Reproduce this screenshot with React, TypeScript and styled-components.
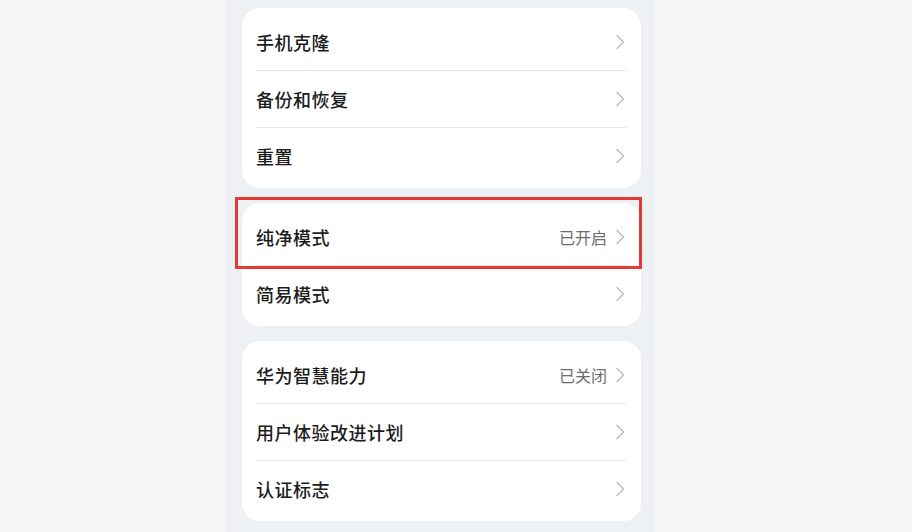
import React from "react";
import styled, { createGlobalStyle } from "styled-components";

type SettingItem = {
  label: string;
  value?: string;
  highlighted?: boolean;
};

const GROUPS: SettingItem[][] = [
  [{ label: "手机克隆" }, { label: "备份和恢复" }, { label: "重置" }],
  [{ label: "纯净模式", value: "已开启", highlighted: true }, { label: "简易模式" }],
  [
    { label: "华为智慧能力", value: "已关闭" },
    { label: "用户体验改进计划" },
    { label: "认证标志" },
  ],
];

const GlobalStyle = createGlobalStyle`
  html, body {
    margin: 0;
    padding: 0;
    background: #f6f6f6;
  }
  body {
    font-family: "Noto Sans CJK SC", "Noto Sans", sans-serif;
  }
`;

const Chevron = () => (
  <ChevronIcon width="10" height="16" viewBox="0 0 10 16" fill="none">
    <path
      d="M2 1.5L8.5 8L2 14.5"
      stroke="#bdbdbd"
      strokeWidth="1.5"
      strokeLinecap="round"
      strokeLinejoin="round"
    />
  </ChevronIcon>
);

const SettingRow = ({ label, value, highlighted }: SettingItem) => (
  <Row $highlighted={highlighted}>
    <Label>{label}</Label>
    <Trailing>
      {value && <Value>{value}</Value>}
      <Chevron />
    </Trailing>
  </Row>
);

export default function App() {
  return (
    <>
      <GlobalStyle />
      <Page>
        <Column>
          {GROUPS.map((group, index) => (
            <Card key={index}>
              {group.map((item) => (
                <SettingRow key={item.label} {...item} />
              ))}
            </Card>
          ))}
        </Column>
      </Page>
    </>
  );
}

const Page = styled.div`
  min-height: 532px;
  display: flex;
`;

const Column = styled.div`
  margin-left: 226px;
  width: 429px;
  min-height: 532px;
  box-sizing: border-box;
  padding: 8px 14px 0 16px;
  background: #eef1f3;
  display: flex;
  flex-direction: column;
  gap: 15px;
`;

const Card = styled.div`
  background: #ffffff;
  border-radius: 18px;
  padding: 5px 0 4px;
`;

const Row = styled.div<{ $highlighted?: boolean }>`
  position: relative;
  height: 57px;
  margin: 0 14px;
  display: flex;
  align-items: center;
  justify-content: space-between;

  & + & {
    border-top: 1px solid #e9e9e9;
    height: 56px;
  }

  ${({ $highlighted }) =>
    $highlighted &&
    `
    &::after {
      content: "";
      position: absolute;
      top: -11px;
      bottom: -4px;
      left: -21px;
      right: -15px;
      border: 3px solid #e53935;
      pointer-events: none;
      z-index: 1;
    }
  `}
`;

const Label = styled.span`
  font-size: 18px;
  font-weight: 500;
  color: #1c1c1c;
  letter-spacing: 0.5px;
`;

const Trailing = styled.div`
  display: flex;
  align-items: center;
  gap: 8px;
  margin-right: 2px;
`;

const Value = styled.span`
  font-size: 16px;
  color: #6e6e6e;
`;

const ChevronIcon = styled.svg`
  display: block;
`;
